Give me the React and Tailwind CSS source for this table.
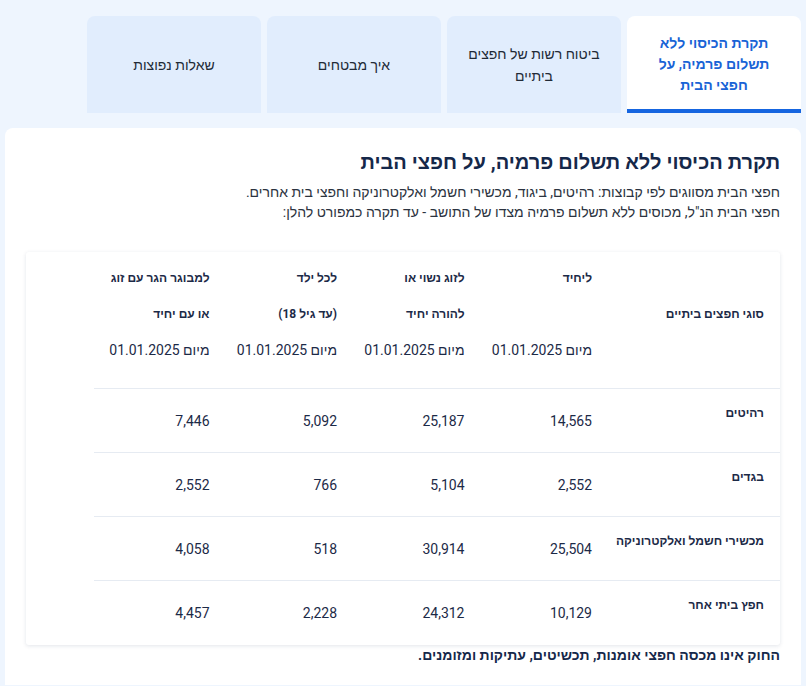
const tabs = [
  { label: 'תקרת הכיסוי ללא תשלום פרמיה, על חפצי הבית', active: true },
  { label: 'ביטוח רשות של חפצים ביתיים' },
  { label: 'איך מבטחים' },
  { label: 'שאלות נפוצות' },
]

const heads = [
  ['ליחיד', ''],
  ['לזוג נשוי או', 'להורה יחיד'],
  ['לכל ילד', '(עד גיל 18)'],
  ['למבוגר הגר עם זוג', 'או עם יחיד'],
]

const rows = [
  ['רהיטים', '14,565', '25,187', '5,092', '7,446'],
  ['בגדים', '2,552', '5,104', '766', '2,552'],
  ['מכשירי חשמל ואלקטרוניקה', '25,504', '30,914', '518', '4,058'],
  ['חפץ ביתי אחר', '10,129', '24,312', '2,228', '4,457'],
]

export default function App() {
  return (
    <div
      dir="rtl"
      className="min-h-[686px] bg-[#eef5fe] px-[5px] pt-[16px] text-[#1c2a47]"
      style={{ fontFamily: '"Roboto", "Liberation Sans", sans-serif' }}
    >
      {/* Tabs */}
      <div className="flex gap-[6px]">
        {tabs.map((t) => (
          <div
            key={t.label}
            className={
              t.active
                ? 'flex h-[97px] w-[174px] items-center justify-center rounded-t-[8px] border-b-[4px] border-[#1565e0] bg-white px-[22px] pt-[4px] text-center text-[14px] font-semibold leading-[21px] text-[#1863d6]'
                : 'flex h-[97px] w-[174px] items-center justify-center rounded-t-[8px] bg-[#e1edfd] px-[20px] text-center text-[14px] leading-[22px] text-[#222a36]'
            }
          >
            {t.label}
          </div>
        ))}
      </div>

      {/* Card */}
      <div className="mt-[15px] rounded-t-[8px] bg-white px-[21px] pt-[20px] pb-[20px]">
        <h1 className="text-[20px] font-bold leading-[28px] text-[#15284a]">
          תקרת הכיסוי ללא תשלום פרמיה, על חפצי הבית
        </h1>
        <p className="mt-[6px] text-[14px] leading-[20px] text-[#2b3340]">
          חפצי הבית מסווגים לפי קבוצות: רהיטים, ביגוד, מכשירי חשמל ואלקטרוניקה וחפצי בית אחרים.
          <br />
          חפצי הבית הנ"ל, מכוסים ללא תשלום פרמיה מצדו של התושב - עד תקרה כמפורט להלן:
        </p>

        <div className="mt-[30px] rounded-[3px] bg-white pl-[68px] shadow-[0_1px_4px_rgba(20,40,80,0.12)]">
          <table className="w-full table-fixed border-collapse">
            <colgroup>
              <col className="w-[176px]" />
              <col />
              <col />
              <col />
              <col />
            </colgroup>
            <thead>
              <tr>
                <th className="pr-[16px] pt-[8px] pb-[20px] text-right align-top text-[12px] font-bold">
                  <div className="h-[36px]" />
                  <div className="flex h-[36px] items-center">סוגי חפצים ביתיים</div>
                </th>
                {heads.map(([a, b]) => (
                  <th key={a} className="pr-[12px] pt-[8px] pb-[20px] text-right align-top">
                    <div className="flex h-[36px] items-center text-[12px] font-bold">{a}</div>
                    <div className="flex h-[36px] items-center text-[12px] font-bold">{b}</div>
                    <div className="flex h-[36px] items-center text-[14px] font-normal">מיום 01.01.2025</div>
                  </th>
                ))}
              </tr>
            </thead>
            <tbody>
              {rows.map((r) => (
                <tr key={r[0]} className="h-[64px] border-t border-[#e6ebf2]">
                  <td className="pr-[16px] pt-[16px] align-top text-[12px] font-bold leading-[16px]">{r[0]}</td>
                  {r.slice(1).map((v, i) => (
                    <td key={i} className="pr-[12px] pt-[2px] align-middle text-[14px]">
                      {v}
                    </td>
                  ))}
                </tr>
              ))}
            </tbody>
          </table>
        </div>

        <p className="mt-0 text-[14px] font-bold leading-[20px] text-[#15284a]">
          החוק אינו מכסה חפצי אומנות, תכשיטים, עתיקות ומזומנים.
        </p>
      </div>
    </div>
  )
}
